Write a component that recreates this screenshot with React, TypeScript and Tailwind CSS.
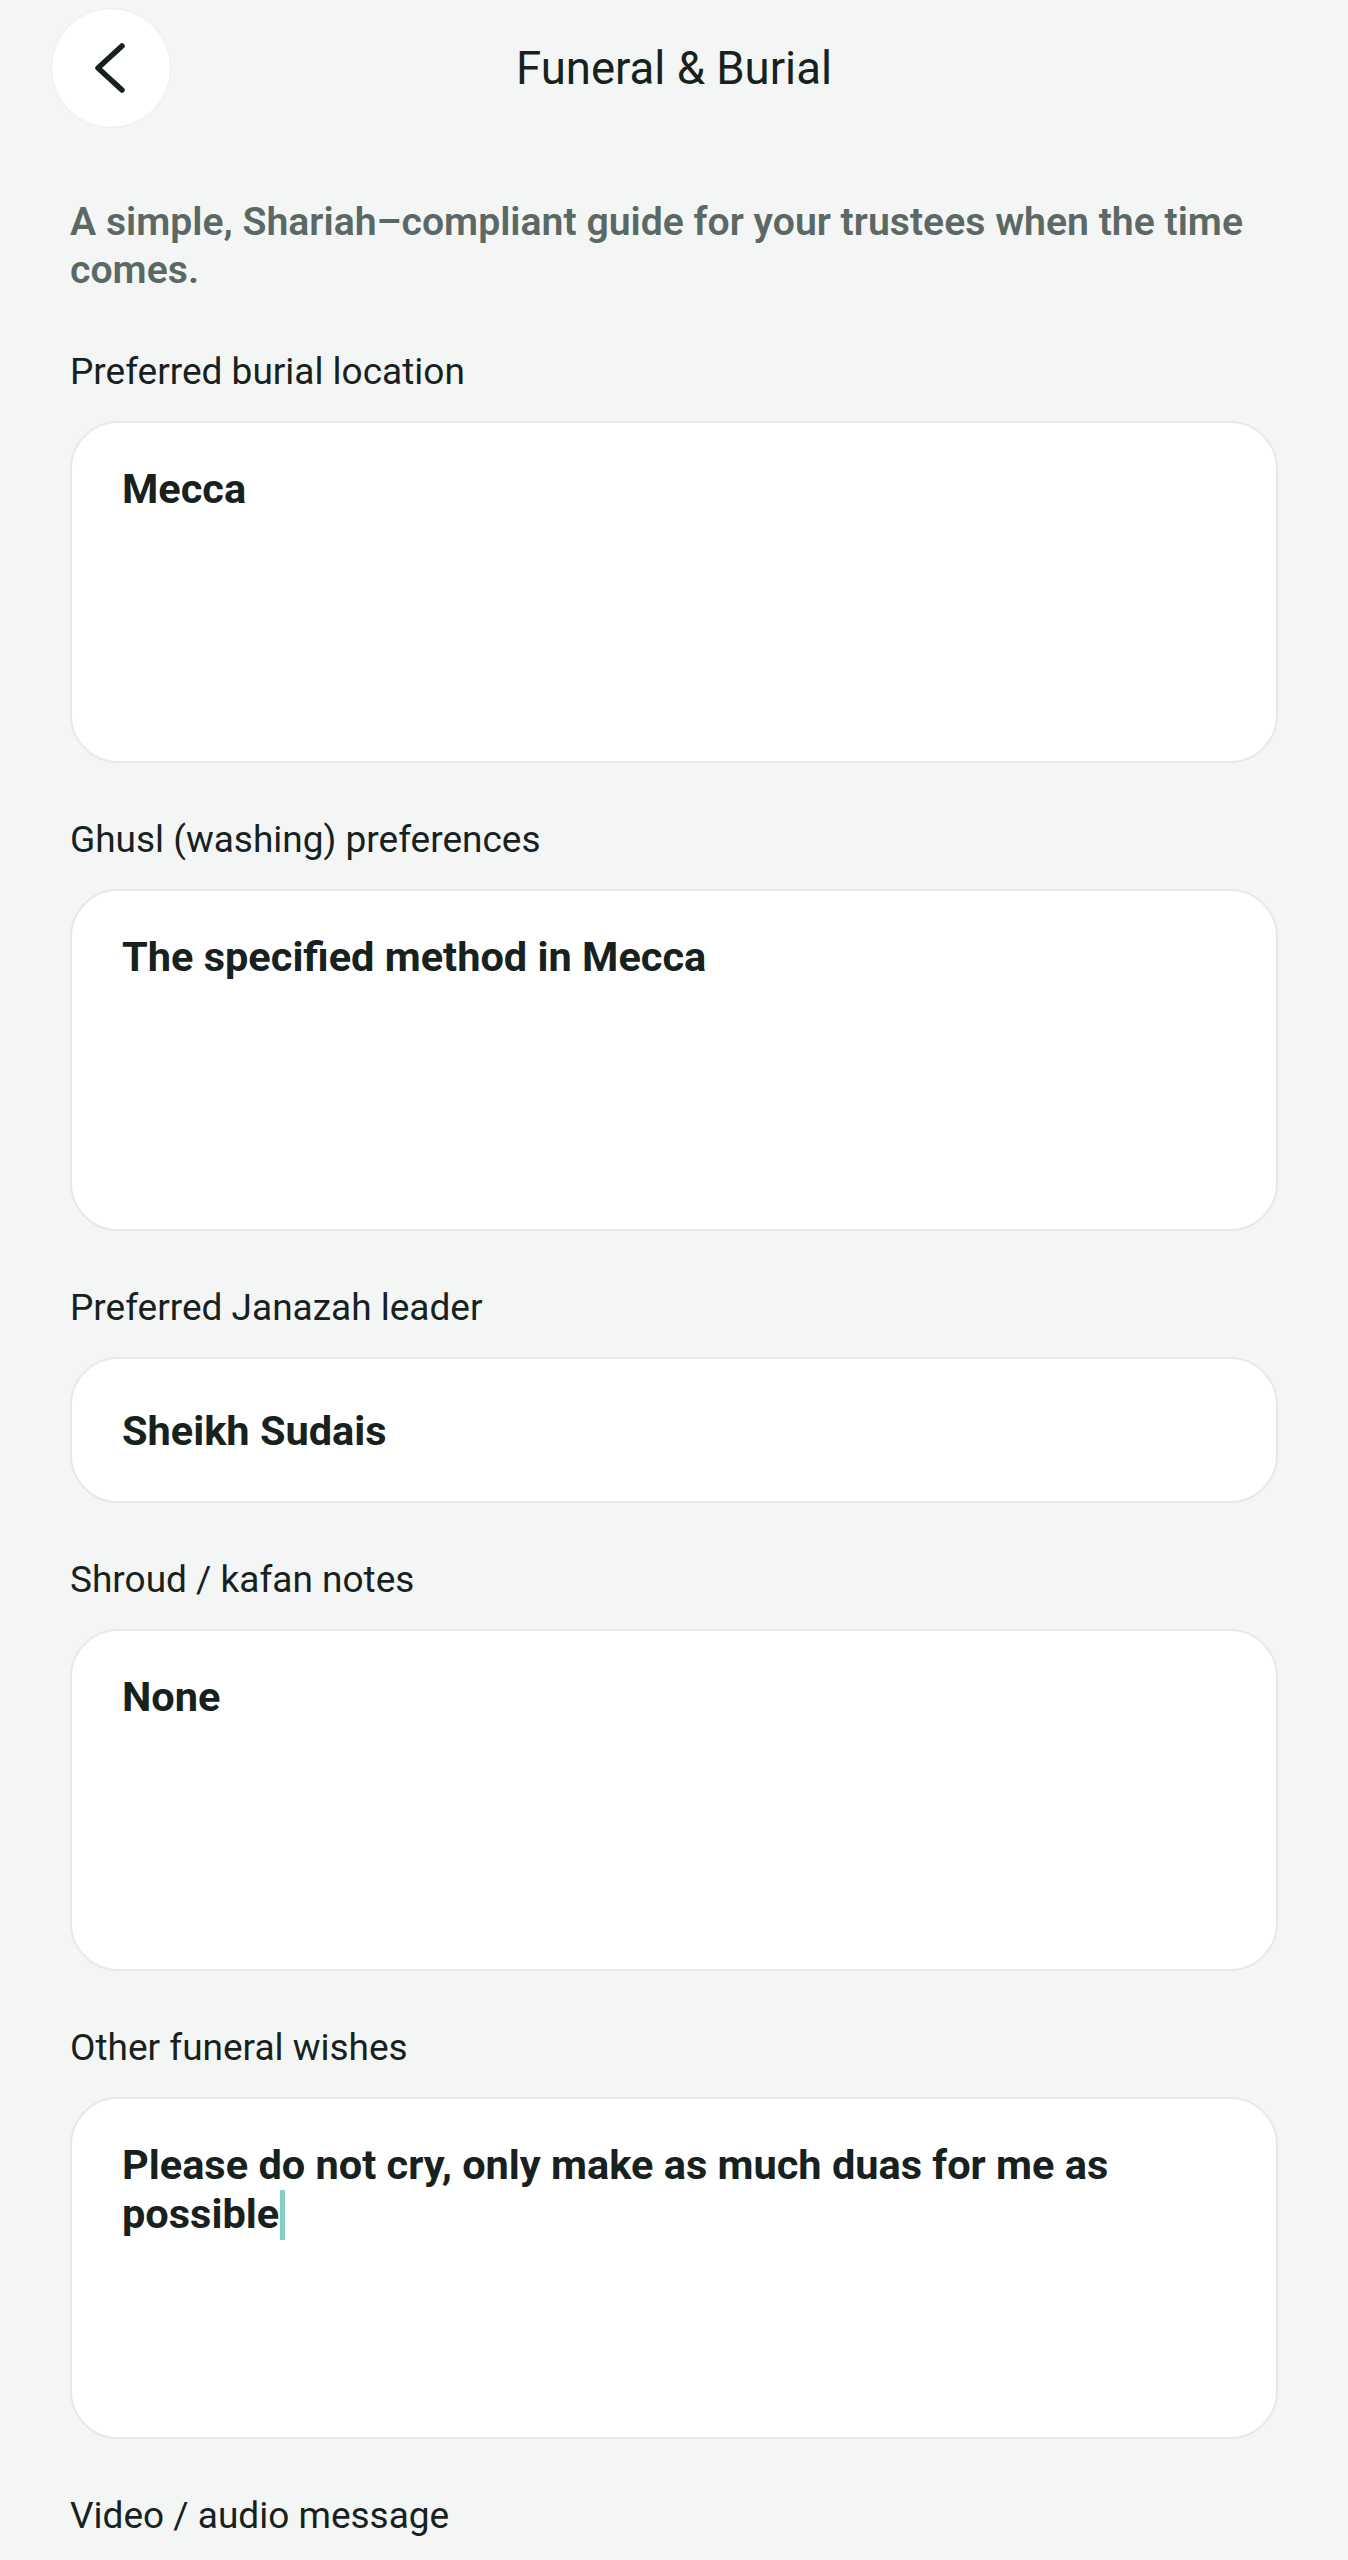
import React from "react";

const FONT = { fontFamily: "Roboto, 'Noto Sans', Arial, sans-serif" };

const BOX =
  "rounded-[48px] border-2 border-[#e6e9e8] bg-white px-[50px] text-[41.5px] font-bold leading-[49px] text-[#17211e]";

function Label({ children }: { children: React.ReactNode }) {
  return (
    <div className="mb-[28px] text-[37px] leading-[42px] text-[#17211e]">{children}</div>
  );
}

function Area({ label, value, caret }: { label: string; value: string; caret?: boolean }) {
  return (
    <div>
      <Label>{label}</Label>
      <div className={`${BOX} h-[342px] pt-[41px]`}>
        {value}
        {caret && (
          <span className="ml-[1px] inline-block h-[50px] w-[5px] bg-[#86cfc4] align-[-12px]" />
        )}
      </div>
    </div>
  );
}

function Line({ label, value }: { label: string; value: string }) {
  return (
    <div>
      <Label>{label}</Label>
      <div className={`${BOX} flex h-[146px] items-center`}>{value}</div>
    </div>
  );
}

export default function App() {
  return (
    <div style={FONT} className="min-h-[2560px] w-full bg-[#f4f6f5] px-[70px] pt-[8px]">
      {/* Header */}
      <div className="relative flex h-[120px] items-center justify-center">
        <button className="absolute left-[-19px] top-0 flex h-[120px] w-[120px] items-center justify-center rounded-full border border-[#eceeed] bg-white">
          <svg width="40" height="56" viewBox="0 0 40 56" fill="none">
            <path
              d="M31 6L7 28l24 22"
              stroke="#17211e"
              strokeWidth="5.5"
              strokeLinecap="round"
              strokeLinejoin="round"
            />
          </svg>
        </button>
        <h1 className="pt-[2px] text-[45.5px] font-normal leading-[52px] text-[#17211e]">
          Funeral &amp; Burial
        </h1>
      </div>

      <p className="mt-[70px] text-[39.2px] font-semibold leading-[48px] text-[#5b6864]">
        A simple, Shariah–compliant guide for your trustees when the time comes.
      </p>

      <div className="mt-[57px] flex flex-col gap-[56px]">
        <Area label="Preferred burial location" value="Mecca" />
        <Area label="Ghusl (washing) preferences" value="The specified method in Mecca" />
        <Line label="Preferred Janazah leader" value="Sheikh Sudais" />
        <Area label="Shroud / kafan notes" value="None" />
        <Area
          label="Other funeral wishes"
          value="Please do not cry, only make as much duas for me as possible"
          caret
        />
        <div>
          <Label>Video / audio message</Label>
        </div>
      </div>
    </div>
  );
}
